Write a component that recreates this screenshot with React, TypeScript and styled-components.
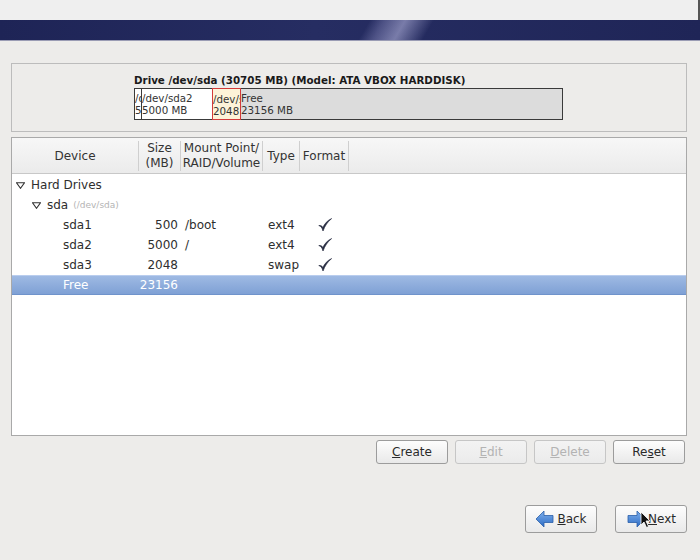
import styled, { createGlobalStyle } from 'styled-components';

const GlobalStyle = createGlobalStyle`
  html, body {
    margin: 0;
    padding: 0;
    background: #edecea;
  }
  body {
    font-family: "DejaVu Sans", "Liberation Sans", sans-serif;
    font-size: 12px;
    color: #2e2e2e;
  }
`;

const Page = styled.div`
  position: relative;
  width: 700px;
  height: 560px;
  display: flex;
  flex-direction: column;
  background: #edecea;
  overflow: hidden;
`;

const TopStrip = styled.div`
  height: 20px;
  background: #efefef;
  border-right: 2px solid #555;
`;

const Banner = styled.div`
  height: 20px;
  background:
    linear-gradient(
      120deg,
      transparent 0%,
      transparent 52%,
      rgba(150, 150, 200, 0.35) 54%,
      rgba(190, 190, 230, 0.55) 57%,
      transparent 61%,
      transparent 100%
    ),
    linear-gradient(90deg, #1e2456 0%, #262d62 45%, #1f2557 100%);
  border-bottom: 1px solid #9a9cb4;
`;

const Content = styled.div`
  flex: 1;
  display: flex;
  flex-direction: column;
  padding: 22px 13px 0 11px;
`;

const DrivePanel = styled.div`
  border: 1px solid #bcbcbc;
  background: #edecea;
  padding: 9px 0 0 122px;
  box-sizing: border-box;
  height: 69px;
`;

const DriveTitle = styled.div`
  font-weight: bold;
  font-size: 10.3px;
  color: #1a1a1a;
  line-height: 14px;
  margin-bottom: 1px;
`;

const DriveBar = styled.div`
  width: 429px;
  height: 32px;
  border: 1px solid #3a3a3a;
  box-sizing: border-box;
  display: flex;
  background: #dcdcdc;
`;

const Segment = styled.div<{ $w: number; $bg: string; $border: string }>`
  width: ${({ $w }) => $w}px;
  flex: ${({ $w }) => ($w ? 'none' : '1')};
  background: ${({ $bg }) => $bg};
  border-right: 1px solid ${({ $border }) => $border};
  box-sizing: border-box;
  overflow: hidden;
  white-space: nowrap;
  font-size: 10.3px;
  line-height: 12px;
  padding-top: 3px;
  color: #333;
`;

const HighlightSegment = styled(Segment)`
  border: 1px solid #d23a3a;
  margin: -1px 0;
  padding-top: 4px;
`;

const TableBox = styled.div`
  margin-top: 5px;
  height: 299px;
  box-sizing: border-box;
  border: 1px solid #a9a9a9;
  background: #ffffff;
  display: flex;
  flex-direction: column;
`;

const HeaderRow = styled.div`
  display: grid;
  grid-template-columns: 127px 42px 82px 37px 49px 1fr;
  height: 35px;
  background: linear-gradient(#f7f7f7, #ebebeb);
  border-bottom: 1px solid #c8c8c8;
`;

const HeaderCell = styled.div<{ $sep?: boolean }>`
  display: flex;
  align-items: center;
  justify-content: center;
  text-align: center;
  line-height: 15px;
  font-size: 12px;
  color: #333;
  border-right: ${({ $sep }) => ($sep ? '1px solid #cfcfcf' : 'none')};
  margin: 3px 0;
`;

const Body = styled.div`
  display: flex;
  flex-direction: column;
  padding-top: 1px;
`;

const Row = styled.div<{ $selected?: boolean }>`
  display: grid;
  grid-template-columns: 127px 42px 82px 37px 49px 1fr;
  height: 20px;
  box-sizing: border-box;
  align-items: center;
  color: ${({ $selected }) => ($selected ? '#ffffff' : '#2e2e2e')};
  background: ${({ $selected }) =>
    $selected ? 'linear-gradient(#a0bbe4, #7d9fd4)' : 'transparent'};
  box-shadow: ${({ $selected }) =>
    $selected ? 'inset 0 1px 0 #b9cdee, inset 0 -1px 0 #6f93cb' : 'none'};
  white-space: nowrap;
`;

const DeviceCell = styled.div<{ $indent: number }>`
  display: flex;
  align-items: center;
  padding-left: ${({ $indent }) => $indent}px;
`;

const Expander = styled.svg`
  width: 9px;
  height: 7px;
  margin-right: 6px;
  flex: none;
`;

const SubPath = styled.span`
  font-size: 9px;
  color: #b4b4b4;
  margin-left: 5px;
`;

const SizeCell = styled.div`
  text-align: right;
  padding-right: 3px;
`;

const TextCell = styled.div<{ $pad: number }>`
  padding-left: ${({ $pad }) => $pad}px;
`;

const CheckCell = styled.div`
  display: flex;
  justify-content: center;
  height: 16px;
`;

const ActionRow = styled.div`
  display: flex;
  justify-content: flex-end;
  gap: 7px;
  margin-top: 4px;
  padding-right: 2px;
`;

const Button = styled.button<{ $disabled?: boolean }>`
  width: 72px;
  height: 24px;
  padding: 0;
  border: 1px solid ${({ $disabled }) => ($disabled ? '#c6c6c6' : '#9c9c9c')};
  border-radius: 3px;
  background: ${({ $disabled }) =>
    $disabled ? 'linear-gradient(#f3f3f3, #ebebeb)' : 'linear-gradient(#fdfdfd, #e9e9e9)'};
  color: ${({ $disabled }) => ($disabled ? '#b3b3b3' : '#2a2a2a')};
  font-family: "DejaVu Sans", "Liberation Sans", sans-serif;
  font-size: 12px;
  display: flex;
  align-items: center;
  justify-content: center;
  gap: 2px;
  box-sizing: border-box;
`;

const NavRow = styled.div`
  display: flex;
  justify-content: flex-end;
  gap: 18px;
  margin-top: 41px;
`;

const NavButton = styled(Button)`
  height: 28px;
`;

const Mnemonic = styled.u`
  text-decoration: underline;
  text-underline-offset: 1px;
`;

const Cursor = styled.svg`
  position: absolute;
  left: 640px;
  top: 511px;
  width: 12px;
  height: 18px;
`;

function Triangle() {
  return (
    <Expander viewBox="0 0 9 7">
      <path d="M0.5 0.8 L8.5 0.8 L4.5 6.3 Z" fill="none" stroke="#333" strokeWidth="1.1" />
    </Expander>
  );
}

function Check() {
  return (
    <svg width="16" height="16" viewBox="0 0 16 16">
      <path
        d="M1.8 8.6 C3.6 8.8 5 10.4 6 14 C7.9 8.8 10.6 4.8 14.6 1.6 C10.4 3.4 7.6 6.8 5.9 10.4 C5 9 3.6 8.2 1.8 8.6 Z"
        fill="#262b40"
        stroke="#262b40"
        strokeWidth="0.7"
        strokeLinejoin="round"
      />
    </svg>
  );
}

function Arrow({ dir }: { dir: 'left' | 'right' }) {
  const pts =
    dir === 'left'
      ? '1,9 9,1 9,5.5 18,5.5 18,12.5 9,12.5 9,17'
      : '19,9 11,1 11,5.5 2,5.5 2,12.5 11,12.5 11,17';
  return (
    <svg width="20" height="18" viewBox="0 0 20 18">
      <defs>
        <linearGradient id={`ag-${dir}`} x1="0" y1="0" x2="0" y2="1">
          <stop offset="0" stopColor="#7fb0ec" />
          <stop offset="1" stopColor="#2c6bc4" />
        </linearGradient>
      </defs>
      <polygon points={pts} fill={`url(#ag-${dir})`} stroke="#2a5ea8" strokeWidth="0.8" />
    </svg>
  );
}

const rows = [
  { name: 'sda1', size: '500', mount: '/boot', type: 'ext4', fmt: true },
  { name: 'sda2', size: '5000', mount: '/', type: 'ext4', fmt: true },
  { name: 'sda3', size: '2048', mount: '', type: 'swap', fmt: true },
];

export default function App() {
  return (
    <Page>
      <GlobalStyle />
      <TopStrip />
      <Banner />
      <Content>
        <DrivePanel>
          <DriveTitle>Drive /dev/sda (30705 MB) (Model: ATA VBOX HARDDISK)</DriveTitle>
          <DriveBar>
            <Segment $w={7} $bg="#ffffff" $border="#3a3a3a">
              /dev/sda1
              <br />
              500 MB
            </Segment>
            <Segment $w={70} $bg="#ffffff" $border="#ffffff">
              /dev/sda2
              <br />
              5000 MB
            </Segment>
            <HighlightSegment $w={29} $bg="#fdf3d8" $border="#d23a3a">
              /dev/sda3
              <br />
              2048
            </HighlightSegment>
            <Segment $w={0} $bg="#dcdcdc" $border="transparent">
              Free
              <br />
              23156 MB
            </Segment>
          </DriveBar>
        </DrivePanel>

        <TableBox>
          <HeaderRow>
            <HeaderCell $sep>Device</HeaderCell>
            <HeaderCell $sep>
              Size
              <br />
              (MB)
            </HeaderCell>
            <HeaderCell $sep>
              Mount Point/
              <br />
              RAID/Volume
            </HeaderCell>
            <HeaderCell $sep>Type</HeaderCell>
            <HeaderCell $sep>Format</HeaderCell>
            <HeaderCell />
          </HeaderRow>
          <Body>
            <Row>
              <DeviceCell $indent={4}>
                <Triangle />
                Hard Drives
              </DeviceCell>
            </Row>
            <Row>
              <DeviceCell $indent={20}>
                <Triangle />
                sda<SubPath>(/dev/sda)</SubPath>
              </DeviceCell>
            </Row>
            {rows.map((r) => (
              <Row key={r.name}>
                <DeviceCell $indent={51}>{r.name}</DeviceCell>
                <SizeCell>{r.size}</SizeCell>
                <TextCell $pad={4}>{r.mount}</TextCell>
                <TextCell $pad={5}>{r.type}</TextCell>
                <CheckCell>{r.fmt && <Check />}</CheckCell>
                <div />
              </Row>
            ))}
            <Row $selected>
              <DeviceCell $indent={51}>Free</DeviceCell>
              <SizeCell>23156</SizeCell>
              <div />
              <div />
              <div />
              <div />
            </Row>
          </Body>
        </TableBox>

        <ActionRow>
          <Button>
            <span>
              <Mnemonic>C</Mnemonic>reate
            </span>
          </Button>
          <Button $disabled>
            <span>
              <Mnemonic>E</Mnemonic>dit
            </span>
          </Button>
          <Button $disabled>
            <span>
              <Mnemonic>D</Mnemonic>elete
            </span>
          </Button>
          <Button>
            <span>
              Re<Mnemonic>s</Mnemonic>et
            </span>
          </Button>
        </ActionRow>

        <NavRow>
          <NavButton>
            <Arrow dir="left" />
            <span>
              <Mnemonic>B</Mnemonic>ack
            </span>
          </NavButton>
          <NavButton>
            <Arrow dir="right" />
            <span>
              <Mnemonic>N</Mnemonic>ext
            </span>
          </NavButton>
        </NavRow>
      </Content>
      <Cursor viewBox="0 0 12 18">
        <path d="M1 1 L1 14 L4 11 L6.5 16.5 L8.5 15.5 L6 10 L10 10 Z" fill="#111" stroke="#fff" strokeWidth="0.8" />
      </Cursor>
    </Page>
  );
}
